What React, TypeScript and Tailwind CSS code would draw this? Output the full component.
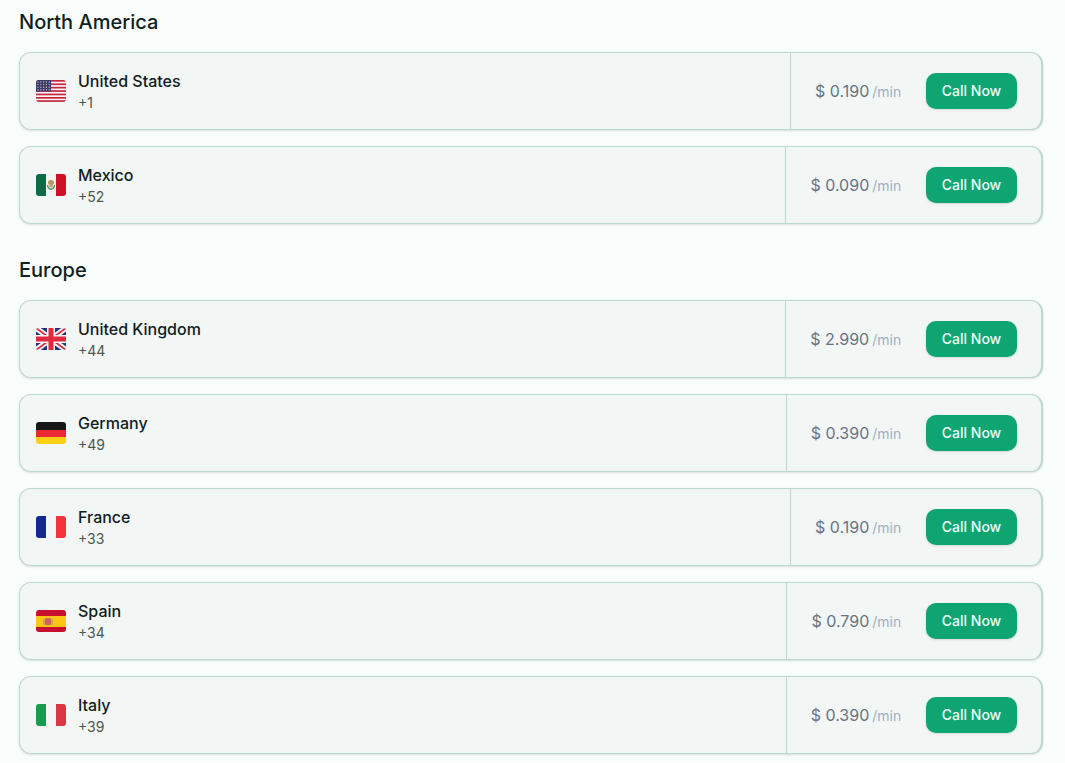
const Flag = ({ children }: { children: React.ReactNode }) => (
  <svg width="30" height="22" viewBox="0 0 30 22" className="shrink-0">
    <defs>
      <clipPath id="flag-clip">
        <rect width="30" height="22" rx="3" />
      </clipPath>
    </defs>
    <g clipPath="url(#flag-clip)">{children}</g>
  </svg>
);

const UsFlag = () => (
  <Flag>
    <rect width="30" height="22" fill="#f5f5f5" />
    {[0, 3.4, 6.8, 10.2, 13.6, 17, 20.2].map((y) => (
      <rect key={y} y={y} width="30" height="1.7" fill="#c8283f" />
    ))}
    <rect width="15" height="11.5" fill="#3c3b6e" />
    {[2, 4.6, 7.2, 9.8].map((y) =>
      [2, 4.8, 7.6, 10.4, 13.2].map((x) => (
        <circle key={`${x}-${y}`} cx={x} cy={y} r="0.7" fill="#cdb4ac" />
      )),
    )}
  </Flag>
);

const MxFlag = () => (
  <Flag>
    <rect width="10" height="22" fill="#0f6b47" />
    <rect x="10" width="10" height="22" fill="#f3f3f3" />
    <rect x="20" width="10" height="22" fill="#ce1126" />
    <ellipse cx="15" cy="8.5" rx="3" ry="2.6" fill="#b59a63" />
    <path d="M11.5 11C12 16.5 18 16.5 18.5 11" fill="none" stroke="#4f9a6b" strokeWidth="1.5" />
    <rect x="13.3" y="10.5" width="3.4" height="3" fill="#c9a36a" />
  </Flag>
);

const UkFlag = () => (
  <Flag>
    <rect width="30" height="22" fill="#23307f" />
    <path d="M0 0L30 22M30 0L0 22" stroke="#f5f5f5" strokeWidth="5.5" />
    <path d="M0 0L30 22M30 0L0 22" stroke="#e0283f" strokeWidth="1.8" />
    <path d="M15 0V22M0 11H30" stroke="#f5f5f5" strokeWidth="8" />
    <path d="M15 0V22M0 11H30" stroke="#e0283f" strokeWidth="5" />
  </Flag>
);

const DeFlag = () => (
  <Flag>
    <rect width="30" height="8" fill="#171717" />
    <rect y="8" width="30" height="7" fill="#ea2a33" />
    <rect y="15" width="30" height="7" fill="#fdd016" />
  </Flag>
);

const FrFlag = () => (
  <Flag>
    <rect width="10" height="22" fill="#14288f" />
    <rect x="10" width="10" height="22" fill="#f5f5f5" />
    <rect x="20" width="10" height="22" fill="#f5333f" />
  </Flag>
);

const EsFlag = () => (
  <Flag>
    <rect width="30" height="22" fill="#c8102e" />
    <rect y="6" width="30" height="11" fill="#fbc615" />
    <rect x="9" y="8" width="6" height="7" rx="1.5" fill="#d9605a" />
    <rect x="7.5" y="8.5" width="1.2" height="6.5" fill="#a89a70" />
    <rect x="15.3" y="8.5" width="1.2" height="6.5" fill="#a89a70" />
  </Flag>
);

const ItFlag = () => (
  <Flag>
    <rect width="10" height="22" fill="#169b4f" />
    <rect x="10" width="10" height="22" fill="#f5f5f5" />
    <rect x="20" width="10" height="22" fill="#dc3545" />
  </Flag>
);

type Country = {
  name: string;
  code: string;
  price: string;
  flag: React.ReactNode;
};

const regions: { title: string; countries: Country[] }[] = [
  {
    title: "North America",
    countries: [
      { name: "United States", code: "+1", price: "0.190", flag: <UsFlag /> },
      { name: "Mexico", code: "+52", price: "0.090", flag: <MxFlag /> },
    ],
  },
  {
    title: "Europe",
    countries: [
      { name: "United Kingdom", code: "+44", price: "2.990", flag: <UkFlag /> },
      { name: "Germany", code: "+49", price: "0.390", flag: <DeFlag /> },
      { name: "France", code: "+33", price: "0.190", flag: <FrFlag /> },
      { name: "Spain", code: "+34", price: "0.790", flag: <EsFlag /> },
      { name: "Italy", code: "+39", price: "0.390", flag: <ItFlag /> },
    ],
  },
];

export default function App() {
  return (
    <div className="h-[763px] overflow-hidden bg-[#f9fdfb] pl-[19px] pr-[22px] pt-2 font-['Inter',sans-serif]">
      <div className="flex flex-col gap-8">
        {regions.map((r) => (
          <section key={r.title}>
            <h2 className="mb-4 text-xl leading-7 font-medium text-[#10201c]">
              {r.title}
            </h2>
            <div className="flex flex-col gap-4">
              {r.countries.map((c) => (
                <div
                  key={c.name}
                  className="flex h-[78px] items-stretch rounded-xl border border-r-2 border-[#bcd9cd] bg-[#f2f6f5] shadow-sm"
                >
                  <div className="flex flex-1 items-center gap-3 pl-4">
                    {c.flag}
                    <div>
                      <div className="text-base leading-6 font-medium text-[#10201c]">
                        {c.name}
                      </div>
                      <div className="text-sm leading-5 text-[#48594f]">
                        {c.code}
                      </div>
                    </div>
                  </div>
                  <div className="flex items-center gap-6 border-l border-[#bcd9cd] px-6">
                    <div className="whitespace-nowrap text-[#6b7280]">
                      <span className="text-base">$ {c.price}</span>
                      <span className="ml-[3px] mr-[0.8px] text-sm text-[#a3aebd]">/min</span>
                    </div>
                    <button className="h-9 w-[91px] rounded-[10px] bg-[#0ea572] text-sm font-medium text-[#f0fdf7] shadow-sm">
                      Call Now
                    </button>
                  </div>
                </div>
              ))}
            </div>
          </section>
        ))}
      </div>
    </div>
  );
}
